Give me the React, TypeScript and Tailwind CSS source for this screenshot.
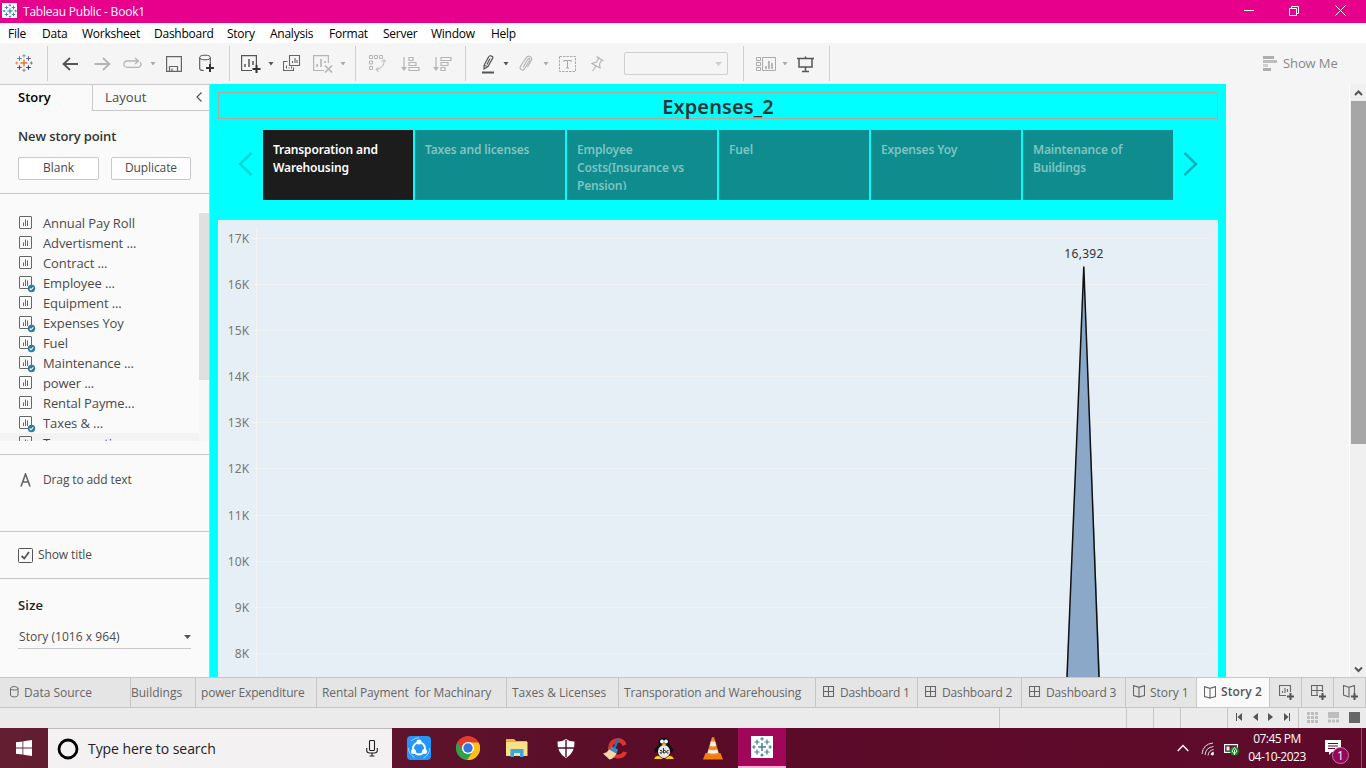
import React from "react";

type P = { className?: string; children?: React.ReactNode };

const Svg = ({ w, h, className = "", children }: P & { w: number; h: number }) => (
  <svg width={w} height={h} viewBox={`0 0 ${w} ${h}`} fill="none" className={`block shrink-0 ${className}`}>
    {children}
  </svg>
);

/* Cross-cluster mark: one big plus, four medium diagonals, four small ones on the axes */
const crosses: [number, number, number, string][] = [
  [9, 9, 3.5, "#e8762c"],
  [4.5, 4.5, 2.3, "#5b879b"],
  [13.5, 4.5, 2.3, "#5c6692"],
  [4.5, 13.5, 2.3, "#c72035"],
  [13.5, 13.5, 2.3, "#1f447e"],
  [9, 1.7, 1.5, "#7199a6"],
  [9, 16.3, 1.5, "#7b848f"],
  [1.7, 9, 1.5, "#eb912c"],
  [16.3, 9, 1.5, "#59879b"],
];
const Mark = ({ size, mono }: { size: number; mono?: string }) => (
  <svg width={size} height={size} viewBox="0 0 18 18" className="block shrink-0">
    {crosses.map(([x, y, r, c], i) => (
      <path key={i} d={`M${x - r} ${y}H${x + r}M${x} ${y - r}V${y + r}`} stroke={mono || c} strokeWidth={i ? 1.1 : 1.4} />
    ))}
  </svg>
);

const Caret = ({ className = "" }: P) => (
  <Svg w={6} h={4} className={className}>
    <path d="M.5 0h5L3 3.5z" fill="currentColor" />
  </Svg>
);

const Sheet = ({ check }: { check?: boolean }) => (
  <Svg w={17} h={17}>
    <rect x="0.5" y="0.5" width="12" height="12" rx="0.5" stroke="#666" />
    <path d="M4.5 10V6.500M6.500 10V3.500M8.500 10V4.500" stroke="#666" />
    {check && (
      <>
        <circle cx="12.500" cy="12.500" r="3.700" fill="#2f7aa3" />
        <path d="M10.700 12.500l1.300 1.300 2.300-2.500" stroke="#fff" strokeWidth="1.100" />
      </>
    )}
  </Svg>
);

const Sep = () => <div className="h-[35px] w-px shrink-0 bg-[#cfcfcf]" />;

const menus: [string, string][] = [
  ["File", "w-[34px]"],
  ["Data", "w-[40px]"],
  ["Worksheet", "w-[72px]"],
  ["Dashboard", "w-[73px]"],
  ["Story", "w-[43px]"],
  ["Analysis", "w-[59px]"],
  ["Format", "w-[54px]"],
  ["Server", "w-[48px]"],
  ["Window", "w-[60px]"],
  ["Help", "w-[40px]"],
];

function TitleBar() {
  return (
    <header className="flex h-[23px] shrink-0 items-center bg-[#e6008c] pl-[2px] text-white">
      <div className="mt-[-2px] flex h-[15px] w-[15px] items-center justify-center bg-white">
        <Mark size={14} mono="#2b7fad" />
      </div>
      <span className="ml-[6px] flex-1 whitespace-pre text-[12px] tracking-[-0.22px]">Tableau Public - Book1</span>
      <Svg w={10} h={12} className="mr-[35px]"><path d="M0 4.5h10" stroke="#fff" /></Svg>
      <Svg w={11} h={12} className="mr-[35px] mt-[-2px]">
        <path d="M.5 3.500h7v7h-7zM2.500 3.500v-2h7v7h-2" stroke="#fff" />
      </Svg>
      <Svg w={11} h={11} className="mr-[20px] mt-[-3px]"><path d="M.5.5l10 10M10.500.5l-10 10" stroke="#fff" /></Svg>
    </header>
  );
}

function Toolbar() {
  return (
    <div className="flex h-[41px] shrink-0 items-center bg-[#f5f5f5]">
      <div className="flex w-[47px] justify-center pb-px"><Mark size={18} /></div>
      <Sep />
      <Svg w={17} h={14} className="ml-[14px]"><path d="M16 7H1.500M8 1L1.500 7 8 13" stroke="#555" strokeWidth="1.800" /></Svg>
      <Svg w={17} h={14} className="ml-[15px]"><path d="M.5 7h15M9 1l6.500 6L9 13" stroke="#b5b5b5" strokeWidth="1.800" /></Svg>
      <Svg w={19} h={13} className="ml-[12px]">
        <path d="M10.500 4H4a3 3 0 0 0 0 6.300h11a3 3 0 0 0 2.200-5M10 4h5M12 1l3.500 3L12 7" stroke="#b5b5b5" strokeWidth="1.300" />
      </Svg>
      <Caret className="ml-[8px] text-[#aaa]" />
      <Svg w={16} h={16} className="ml-[10px]">
        <path d="M.6.600h14.800v14.800H.6zM3.500 15v-4.500h8V15M6 12.500V15" stroke="#666" strokeWidth="1.200" />
      </Svg>
      <Svg w={16} h={20} className="ml-[17px] mt-[1px]">
        <ellipse cx="6" cy="3.500" rx="5.300" ry="2.300" stroke="#555" />
        <path d="M.7 3.500v11c0 1 1.500 2 4 2M11.300 3.500V10" stroke="#555" strokeWidth="1.100" />
        <path d="M7 14h8M11 10v8" stroke="#333" strokeWidth="2" />
      </Svg>
      <div className="ml-[14px]"><Sep /></div>
      <Svg w={20} h={18} className="ml-[11px] mt-px">
        <path d="M11 15.500H.6V.600h14.800V10" stroke="#555" strokeWidth="1.200" />
        <path d="M4 12V9M8 12V4M12 10V6" stroke="#555" strokeWidth="1.500" />
        <path d="M11.500 14h8M15.500 10v8" stroke="#333" strokeWidth="2" />
      </Svg>
      <Caret className="ml-[7px] text-[#555]" />
      <Svg w={18} h={17} className="ml-[9px]">
        <path d="M6.500.5h10v10h-10zM4.500 6.500h-4v9h10v-3M9.500 8V6M12 8V3M14 8V5M3.500 13.500v-3M6 13.500v-1M8.500 13.500v-2" stroke="#666" strokeWidth="1.100" />
      </Svg>
      <Svg w={20} h={18} className="ml-[12px] mt-px">
        <path d="M11 15.500H.6V.600h14.800V8" stroke="#b5b5b5" strokeWidth="1.200" />
        <path d="M4 12V9M8 12V4M12 8V6M12 10.500l7 7M19 10.500l-7 7" stroke="#b5b5b5" strokeWidth="1.600" />
      </Svg>
      <Caret className="ml-[7px] text-[#aaa]" />
      <div className="ml-[9px]"><Sep /></div>
      <Svg w={17} h={17} className="ml-[13px]">
        <path d="M.5.500h3v3h-3zM5.500.500h3v3h-3zM10.500.500h3v3h-3zM.5 6h3v3h-3zM.5 11.500h3v3h-3zM15 5c.5 5-3 9-7.500 9.500M12.500 7L15 4.500 17 7M9.500 12L7 14.500 9.500 17" stroke="#b5b5b5" />
      </Svg>
      <Svg w={19} h={16} className="ml-[15px]">
        <path d="M3 1v13M8 1.500h4v3H8zM8 6.500h7v3H8zM8 11.500h10v3H8z" stroke="#b5b5b5" strokeWidth="1.200" />
        <path d="M0 11h6l-3 4z" fill="#b5b5b5" />
      </Svg>
      <Svg w={19} h={16} className="ml-[13px]">
        <path d="M3 1v13M8 1.500h10v3H8zM8 6.500h7v3H8zM8 11.500h4v3H8z" stroke="#b5b5b5" strokeWidth="1.200" />
        <path d="M0 11h6l-3 4z" fill="#b5b5b5" />
      </Svg>
      <div className="ml-[13px]"><Sep /></div>
      <Svg w={12} h={19} className="ml-[16px] mt-px">
        <path d="M2 10.500L6.500 2q.7-1.500 2-1.200l1.500.6q1.300.7.600 2L6 11.500 2 14zM2 10.500l4 1M8 3.500L5 9.500" stroke="#555" strokeWidth="1.200" />
        <path d="M0 17.500h12" stroke="#555" strokeWidth="2" />
      </Svg>
      <Caret className="ml-[9px] text-[#555]" />
      <Svg w={14} h={17} className="ml-[10px]">
        <path d="M4 12.500L9 4q1-1 1.700-.3.500.6 0 1.500l-5 8.500q-1.300 2-3.200 1-2.200-1.200-1-3.500L7 3q1.800-2.700 4-1.500 2.600 1.300 1.200 4L8.500 12" stroke="#b5b5b5" strokeWidth="1.200" />
      </Svg>
      <Caret className="ml-[10px] text-[#aaa]" />
      <Svg w={17} h={16} className="ml-[10px]">
        <rect x=".5" y=".5" width="16" height="15" stroke="#aaa" strokeDasharray="2.500 1" />
        <path d="M5 6V4.500h7V6M8.500 4.500v7.500M7 12h3" stroke="#aaa" strokeWidth="1.100" />
      </Svg>
      <Svg w={13} h={16} className="ml-[15px]">
        <path d="M6.500 1l5.500 3.500-2 .5L8.500 8l.5 4L1 7.500 5.500 6l2-3zM5 10l-3.500 5" stroke="#b5b5b5" strokeWidth="1.200" />
      </Svg>
      <div className="ml-[20px] flex h-[23px] w-[104px] items-center justify-end rounded-[2px] border border-[#cfcfcf] pr-[5px]">
        <Svg w={7} h={4}><path d="M0 0h7L3.500 4z" fill="#ccc" /></Svg>
      </div>
      <div className="ml-[15px]"><Sep /></div>
      <Svg w={20} h={15} className="ml-[12px] mt-px">
        <path d="M.5.500h4v3h-4zM.5 5.500h4v3h-4zM.5 10.500h4v3h-4zM6.500.500h13v13h-13z" stroke="#aaa" />
        <path d="M10 12V9M13 12V4M16 12V6" stroke="#aaa" strokeWidth="1.600" />
      </Svg>
      <Caret className="ml-[6px] text-[#aaa]" />
      <Svg w={17} h={17} className="ml-[9px] mt-px">
        <path d="M0 2.500h17M2 2.500V11h13V2.500M8.500 .5v2M8.500 11V15.500M5 15.500h7" stroke="#555" strokeWidth="1.500" />
      </Svg>
      <div className="ml-[15px] flex-1"><Sep /></div>
      <Svg w={14} h={15}>
        <path d="M0 1.500h11M0 13.500h8" stroke="#aeaeae" strokeWidth="3" />
        <path d="M0 5.500h14" stroke="#bdbdbd" strokeWidth="3" />
        <path d="M0 9.500h5" stroke="#d0d0d0" strokeWidth="3" />
      </Svg>
      <span className="ml-[6px] w-[83px] whitespace-pre text-[13px] tracking-[-0.1px] text-[#888]">Show Me</span>
    </div>
  );
}

const sheets: [string, boolean][] = [
  ["Annual Pay Roll", false],
  ["Advertisment ...", false],
  ["Contract ...", false],
  ["Employee ...", true],
  ["Equipment ...", false],
  ["Expenses Yoy", true],
  ["Fuel", true],
  ["Maintenance ...", true],
  ["power ...", false],
  ["Rental Payme...", false],
  ["Taxes & ...", true],
  ["Transporation ...", false],
];

function SidePane() {
  return (
    <aside className="flex w-[210px] shrink-0 flex-col border-r border-t border-[#c8c8c8] bg-[#fafafa] text-[#4a4a4a]">
      <div className="flex h-[26px] shrink-0">
        <div className="w-[92px] pl-[18px] pt-[3px] text-[13px] font-semibold leading-[18px] text-black">Story</div>
        <div className="flex flex-1 items-start border-b border-l border-[#c8c8c8] pl-[12px] pt-[3px] text-[13px] leading-[18px] tracking-[0.1px]">
          <span className="flex-1">Layout</span>
          <Svg w={6} h={10} className="mr-[7px] mt-[4px]"><path d="M5.500.5L1 5l4.500 4.500" stroke="#555" strokeWidth="1.200" /></Svg>
        </div>
      </div>
      <div className="h-[83px] shrink-0 border-b border-[#c8c8c8] px-[18px] pt-[16px]">
        <div className="text-[13px] font-semibold leading-[18px] tracking-[-0.12px] text-[#333]">New story point</div>
        <div className="mt-[12px] flex gap-[12px] text-[12px]">
          <div className="flex h-[23px] w-[81px] items-center justify-center rounded-[2px] border border-[#c8c8c8] bg-white pb-px">Blank</div>
          <div className="flex h-[23px] w-[80px] items-center justify-center rounded-[2px] border border-[#c8c8c8] bg-white pb-px tracking-[-0.1px]">Duplicate</div>
        </div>
      </div>
      <div className="flex h-[261px] shrink-0 border-b border-[#c8c8c8] pb-[13px] pt-[19px]">
        <div className="flex-1 overflow-hidden">
          {sheets.map(([name, used], i) => (
            <div key={name} className={i === 11 ? "flex h-[20px] bg-[#f3f3f3] pl-[19px] pt-[3px]" : "flex h-[20px] pl-[19px] pt-[3px]"}>
              <Sheet check={used} />
              <span className="ml-[7px] mt-[-2px] whitespace-pre text-[13px] leading-[18px] tracking-[-0.1px]">{name}</span>
            </div>
          ))}
        </div>
        <div className="w-[10px] bg-[#f7f7f7]"><div className="h-[167px] bg-[#e0e0e0]" /></div>
      </div>
      <div className="flex h-[77px] shrink-0 border-b border-[#c8c8c8] pl-[20px] pt-[17px] text-[12px] leading-[16px]">
        <Svg w={12} h={14} className="mt-px"><path d="M1 13.500L5.500 1 10 13.500M2.800 9h5.400" stroke="#666" strokeWidth="1.600" /></Svg>
        <span className="ml-[11px] tracking-[-0.12px]">Drag to add text</span>
      </div>
      <div className="flex h-[47px] shrink-0 items-center border-b border-[#c8c8c8] pl-[18px] text-[12px]">
        <Svg w={15} h={15}>
          <rect x=".5" y=".5" width="14" height="14" rx="1" stroke="#555" />
          <path d="M3.500 8l2.800 2.500L11 4" stroke="#555" strokeWidth="1.800" />
        </Svg>
        <span className="ml-[5px] tracking-[-0.1px]">Show title</span>
      </div>
      <div className="px-[18px] pt-[17px]">
        <div className="text-[13px] font-semibold leading-[18px] tracking-[0.2px] text-[#222]">Size</div>
        <div className="mt-[11px] flex h-[24px] items-center border-b border-[#c8c8c8] pl-px pt-px text-[12px] tracking-[0.05px]">
          <span className="flex-1">Story (1016 x 964)</span>
          <Svg w={7} h={4}><path d="M0 0h7L3.500 4z" fill="#555" /></Svg>
        </div>
      </div>
    </aside>
  );
}

const points = ["Transporation and Warehousing", "Taxes and licenses", "Employee Costs(Insurance vs Pension)", "Fuel", "Expenses Yoy", "Maintenance of Buildings"];
const ticks: [string, number][] = [["17K", 18.5], ["16K", 64.5], ["15K", 110.5], ["14K", 156.5], ["13K", 202.5], ["12K", 248.5], ["11K", 295.5], ["10K", 341.5], ["9K", 387.5], ["8K", 433.5]];

function StoryView() {
  return (
    <main className="flex w-[1016px] shrink-0 flex-col bg-[#00ffff] px-[8px] pt-[8px]">
      <h1 className="flex h-[27px] shrink-0 items-center justify-center border border-[#b0a898] pt-[2px] font-['Noto_Sans'] text-[20px] font-semibold tracking-[0.1px] text-[#333]">Expenses_2</h1>
      <div className="mt-[11px] flex h-[70px] shrink-0 items-center">
        <div className="w-[45px] pb-[2px] pl-[20px]"><Svg w={15} h={24}><path d="M13.500 1L2 12l11.500 11" stroke="#00d5d8" strokeWidth="2.500" /></Svg></div>
        <div className="flex gap-[2px]">
          {points.map((p, i) => (
            <div key={p} className={i === 0
              ? "h-[70px] w-[150px] bg-[#1c1c1c] pl-[10px] pr-[8px] pt-[11px] text-white"
              : "h-[70px] w-[150px] bg-[#0f8c8d] pl-[10px] pr-[8px] pt-[11px] text-[#80c3c3]"}>
              <div className="h-[49px] overflow-hidden font-['Noto_Sans'] text-[12px] font-semibold leading-[18px] tracking-[-0.15px]">{p}</div>
            </div>
          ))}
        </div>
        <Svg w={15} h={24} className="ml-[10px] mt-[-2px]"><path d="M1.500 1L13 12 1.500 23" stroke="#00b5b8" strokeWidth="2.500" /></Svg>
      </div>
      <div className="mt-[20px] h-[457px] shrink-0 bg-[#e6eff5]">
        <svg width="1000" height="457" viewBox="0 0 1000 457" className="block font-['Noto_Sans'] text-[12px]">
          <path d="M38.500 8v449" stroke="#f3f3f3" />
          {ticks.map(([t, y]) => (
            <g key={t}>
              <path d={`M33 ${y}H992`} stroke="#f1f2f2" />
              <text x="31.500" y={y + 4.5} textAnchor="end" fill="#777" letterSpacing="0.2">{t}</text>
            </g>
          ))}
          <path d="M848.500 457L866 47l16 410z" fill="#8ba8c8" />
          <path d="M849 457L865.800 46.500 881 457" stroke="#111" strokeWidth="1.500" fill="none" />
          <text x="866" y="38" textAnchor="middle" fill="#333" letterSpacing="0.300">16,392</text>
        </svg>
      </div>
    </main>
  );
}

function Scrollbar() {
  return (
    <div className="flex w-[17px] flex-col items-center border-l border-white bg-[#f0f0f0]">
      <Svg w={15} h={17}><path d="M4 11L7.500 7.500 11 11" stroke="#555" strokeWidth="2" /></Svg>
      <div className="h-[343px] w-[15px] bg-[#a6a6a6]" />
      <div className="flex-1" />
      <Svg w={15} h={17}><path d="M4 7.500L7.500 11 11 7.500" stroke="#555" strokeWidth="2" /></Svg>
    </div>
  );
}

const GridIcon = ({ plus }: { plus?: boolean }) => (
  <Svg w={plus ? 16 : 12} h={plus ? 16 : 12}>
    <path d={plus ? "M11.500 7V.5H.5v10H7M6 .5v10M.5 5.500h11" : "M.5.500h10v10H.5zM5.500.500v10M.5 5.500h10"} stroke="#666" strokeWidth="1.100" />
    {plus && <path d="M8 11.500h7M11.500 8v7" stroke="#555" strokeWidth="2" />}
  </Svg>
);
const BookIcon = ({ plus }: { plus?: boolean }) => (
  <Svg w={plus ? 16 : 12} h={plus ? 16 : 13}>
    <path d={plus ? "M6 2v10L.5 10V.5L6 2.300 11.500.5V8" : "M6 2.300V12L.5 10.500V.6L6 2.300 11.500.6v9.900L6 12"} stroke="#666" strokeWidth="1.100" />
    {plus && <path d="M8 11.500h7M11.500 8v7" stroke="#555" strokeWidth="2" />}
  </Svg>
);

const tabs: { t: string; c: string; icon?: React.ReactNode }[] = [
  { t: "Data Source", c: "w-[131px] pl-[10px] border-r", icon: <Svg w={9} h={12}><path d="M.5 2.500C.5 0 8 0 8 2.500V9c0 2.500-7.500 2.500-7.500 0zM.5 2.500C.5 4.500 8 4.500 8 2.500" stroke="#666" /></Svg> },
  { t: "Buildings", c: "w-[65px] border-r" },
  { t: "power Expenditure", c: "w-[121px] pl-[5px] border-r tracking-[-0.18px]" },
  { t: "Rental Payment  for Machinary", c: "w-[190px] pl-[5px] border-r tracking-[-0.1px]" },
  { t: "Taxes & Licenses", c: "w-[112px] pl-[5px] border-r" },
  { t: "Transporation and Warehousing", c: "w-[197px] pl-[5px] border-r tracking-[-0.13px]" },
  { t: "Dashboard 1", c: "w-[102px] pl-[7px] border-r tracking-[-0.2px]", icon: <GridIcon /> },
  { t: "Dashboard 2", c: "w-[104px] pl-[7px] border-r tracking-[-0.15px]", icon: <GridIcon /> },
  { t: "Dashboard 3", c: "w-[104px] pl-[7px] border-r tracking-[-0.15px]", icon: <GridIcon /> },
  { t: "Story 1", c: "w-[71px] pl-[7px] border-r tracking-[-0.05px]", icon: <BookIcon /> },
];

function SheetTabs() {
  return (
    <nav className="flex h-[31px] shrink-0 border-y border-[#c6c6c6] bg-[#e5e5e5] text-[12px] text-[#666]">
      {tabs.map((x) => (
        <div key={x.t} className={`flex shrink-0 items-center whitespace-pre border-[#c6c6c6] ${x.c}`}>
          {x.icon && <span className="mr-[5px] mt-[-2px]">{x.icon}</span>}
          <span>{x.t}</span>
        </div>
      ))}
      <div className="flex w-[72px] shrink-0 items-center gap-[5px] bg-[#fafafa] pl-[7px] font-semibold text-[#555]"><BookIcon /><span className="whitespace-pre pb-px tracking-[0.1px]">Story 2</span></div>
      <div className="flex w-[33px] items-center border-x border-[#c6c6c6] pl-[9px]">
        <Svg w={16} h={16}><path d="M7 10.500H.5V.500h11V7M3.500 8V6M6 8V3M8.500 7V4" stroke="#666" strokeWidth="1.100" /><path d="M8 11.500h7M11.500 8v7" stroke="#555" strokeWidth="2" /></Svg>
      </div>
      <div className="flex w-[32px] items-center border-r border-[#c6c6c6] pl-[9px]"><GridIcon plus /></div>
      <div className="flex flex-1 items-center border-r border-[#c6c6c6] pl-[9px]"><BookIcon plus /></div>
    </nav>
  );
}

function StatusBar() {
  return (
    <div className="flex h-[20px] shrink-0 bg-[#ebebeb]">
      <div className="w-[1000px] shrink-0 border-r border-[#c6c6c6]" />
      <div className="w-[127px] border-r border-[#c6c6c6]" />
      <div className="w-[27px] border-r border-[#c6c6c6]" />
      <div className="w-[27px] border-r border-[#c6c6c6]" />
      <div className="w-[47px] border-r border-[#c6c6c6]" />
      <div className="flex w-[71px] items-center gap-[10.500px] border-r border-[#c6c6c6] pb-[2px] pl-[8px]">
        <Svg w={6} h={8}><path d="M.5 0v8" stroke="#555" /><path d="M6 0v8L1.500 4z" fill="#555" /></Svg>
        <Svg w={5} h={8}><path d="M5 0v8L0 4z" fill="#555" /></Svg>
        <Svg w={5} h={8}><path d="M0 0v8l5-4z" fill="#555" /></Svg>
        <Svg w={6} h={8}><path d="M5.500 0v8" stroke="#555" /><path d="M0 0v8l4.500-4z" fill="#555" /></Svg>
      </div>
      <div className="flex flex-1 items-center gap-[10px] pb-px pl-[8px]">
        <Svg w={11} h={11}><path d="M0 1.500h11M0 5.500h11M0 9.500h11" stroke="#bdbdbd" strokeWidth="3" strokeDasharray="3 1" /></Svg>
        <Svg w={11} h={11}><path d="M0 0h11v6H0z" fill="#bdbdbd" /><path d="M0 9h11" stroke="#bdbdbd" strokeWidth="3" strokeDasharray="3 1" /></Svg>
        <div className="h-[11px] w-[11px] bg-[#666]" />
      </div>
    </div>
  );
}

function Taskbar() {
  return (
    <footer className="flex h-[40px] shrink-0 bg-linear-to-r from-[#641e32] via-[#590b27] to-[#600a2b] text-white">
      <div className="flex w-[48px] shrink-0 items-center justify-center">
        <Svg w={16} h={16}><path d="M0 2.300l6.500-.9v6.200H0zM7.300 1.300L16 0v7.600H7.300zM0 8.400h6.500v6.200L0 13.700zM7.300 8.400H16V16l-8.700-1.300z" fill="#fff" /></Svg>
      </div>
      <div className="flex w-[344px] shrink-0 items-center border-t border-[#c0b8bb] bg-[#f4f1f3] pl-[9px] text-[#222]">
        <Svg w={22} h={22}><circle cx="11" cy="11" r="9" stroke="#000" strokeWidth="2.800" /></Svg>
        <span className="ml-[9px] flex-1 whitespace-pre text-[14px] tracking-[-0.06px]">Type here to search</span>
        <Svg w={12} h={17} className="mr-[14px]"><rect x="3.500" y=".5" width="5" height="10" rx="1" stroke="#222" strokeWidth="1.100" /><path d="M.7 8v2.500q0 2.500 3 2.500h4.600q3 0 3-2.500V8M6 13v3M3.500 16h5" stroke="#222" strokeWidth="1.100" /></Svg>
      </div>
      <div className="flex shrink-0 items-center">
        <div className="flex w-[49px] justify-center pl-[5px]">
          <Svg w={24} h={24}><rect width="24" height="24" rx="4" fill="#2597fc" /><circle cx="12" cy="12.500" r="6" stroke="#fff" strokeWidth="1.800" /><g fill="#fff"><circle cx="12" cy="6" r="2.500" /><circle cx="6.500" cy="15.500" r="2.500" /><circle cx="17.500" cy="15.500" r="2.500" /></g><path d="M4 5Q8 1.500 12 1.700M22.500 12q0 7-6 10M1.500 12q0 6 6 9.500" stroke="#9bd0ff" /></Svg>
        </div>
        <div className="flex w-[49px] justify-center pl-[4px]">
          <Svg w={24} h={24}><circle cx="12" cy="12" r="12" fill="#e33b2e" /><path d="M1.600 6A12 12 0 0 0 11 24l6-9H7z" fill="#2da14c" /><path d="M12 6.500h10.700A12 12 0 0 1 11 24l6.200-9z" fill="#fbc116" /><circle cx="12" cy="12" r="6.100" fill="#fff" /><circle cx="12" cy="12" r="4.700" fill="#3676dd" /></Svg>
        </div>
        <div className="flex w-[49px] justify-center pl-[4px]">
          <Svg w={22} h={20}><path d="M0 1h8l2 2h11v15H0z" fill="#e9b53e" /><path d="M0 4h21.500v14H0z" fill="#fbdf86" /><path d="M4.500 19v-8h13v8h-3.500v-4H8v4z" fill="#36a8df" /></Svg>
        </div>
        <div className="flex w-[49px] justify-center pl-[4px]">
          <Svg w={18} h={19}><path d="M9 0q4 2.800 8.500 2.500Q18 14 9 19 0 14 .5 2.500 5 2.800 9 0z" fill="#fff" /><path d="M9 1v17M1 9h16" stroke="#590b27" strokeWidth="1.400" /></Svg>
        </div>
        <div className="flex w-[49px] justify-center pl-[6px]">
          <Svg w={25} h={23}><path d="M23.500 7.500l-4 1.500q-1-3.500-4.500-3.500-5.500.5-5.500 6t5.500 6q3.500 0 5-3l4 .8q-2 6.500-9 6.200Q5 21 5 11.500T15 1q6.500 0 8.500 6.500z" fill="#d8352c" /><path d="M15.500 1.500L11 12" stroke="#2774b5" strokeWidth="2.500" /><path d="M8.500 9.500l6.500 3-1.500 4-7.500-3.500z" fill="#3c8cc9" /><path d="M6 12.500l7.500 4q-3 5.500-7 6L0 16.500q4-.5 6-4z" fill="#f4d8a8" /></Svg>
        </div>
        <div className="flex w-[49px] justify-center pl-[4px]">
          <Svg w={22} h={23}><path d="M11 .5c4 0 5.200 3 5.200 6.500l4.500 6-2 3L16 13l1 8H5l1-8-3.500 3-1.500-3 4.700-6C5.700 3.500 7 .5 11 .5z" fill="#111" /><ellipse cx="11" cy="14.500" rx="6" ry="6.500" fill="#e8e8e8" /><circle cx="9" cy="4.500" r="1.900" fill="#fff" /><circle cx="13" cy="4.500" r="1.900" fill="#fff" /><path d="M8.500 7l2.500-1 2.500 1-2.500 2z" fill="#f5b91d" /><path d="M7 14q1-2 2 0v2q-2 1-2-1M10.500 11v5q2 .5 2-1.500t-2-1M15.500 13.500q-2 0-2 1.500t2 1" stroke="#333" /><path d="M1 22q2-4 5-3l4 3zM12 22l4-3q3-1 5 3z" fill="#fccc16" /></Svg>
        </div>
        <div className="flex w-[52px] justify-center pl-[2px]">
          <Svg w={20} h={23}><path d="M2.500 16h15L20 22.500H0z" fill="#ef7e0a" /><path d="M10 0q1 0 1.300 1L16 17q-6 3.500-12 0L8.700 1Q9 0 10 0z" fill="#f28a16" /><path d="M7.800 4.500h4.400l1.200 4.300q-3.400 1.500-6.800 0zM5.600 12.500q4.400 1.500 8.800 0l1 3.200q-5.400 2-10.800 0z" fill="#eee" /></Svg>
        </div>
        <div className="flex h-[40px] w-[48px] items-center justify-center border-b-2 border-[#ffacd9] bg-[#a10758]">
          <div className="flex h-[22px] w-[22px] items-center justify-center bg-white"><Mark size={20} mono="#477e9b" /></div>
        </div>
      </div>
      <div className="flex-1" />
      <Svg w={12} h={8} className="mt-[16px]"><path d="M.7 7L6 1.500 11.300 7" stroke="#fff" strokeWidth="1.400" /></Svg>
      <Svg w={14} h={14} className="ml-[12px] mt-[14px]"><path d="M1 12Q2 2 12 1M4 13q.5-7.500 8.500-8.500M7 13.500q.5-5 5.500-6M10 13q.5-2.500 3-3" stroke="#ddd" /><circle cx="11.500" cy="12" r="1.400" fill="#fff" /></Svg>
      <Svg w={16} h={13} className="ml-[9px] mt-[15px]"><path d="M.6 1.600h12.800v7.800H.6z" stroke="#fff" strokeWidth="1.200" /><path d="M2.500 3.500h3v4h-3z" fill="#fff" /><circle cx="10.500" cy="8" r="4.500" fill="#0b8a20" /><path d="M10.500 4.500L13 8l-2.500 3L8 8zM10.500 7v5" stroke="#d8f5d8" /></Svg>
      <div className="ml-[5px] mt-[2px] w-[64px] whitespace-pre text-center text-[12px] leading-[18px] tracking-[-0.5px]">07:45 PM<br />04-10-2023</div>
      <Svg w={26} h={28} className="ml-[15px] mt-[10px]"><path d="M1 2h16v12H8l-3 3v-3H1z" fill="#fff" /><path d="M4 5.500h10M4 8h10M4 10.500h7" stroke="#600a2b" /><circle cx="16.500" cy="17.500" r="8" fill="#97065b" stroke="#c07aa0" /><text x="16.500" y="22" textAnchor="middle" fill="#fff" fontSize="12">1</text></Svg>
      <div className="ml-[11px] mr-[4px] w-px bg-[#8c5066]" />
    </footer>
  );
}

export default function App() {
  return (
    <div className="flex h-[768px] w-[1366px] flex-col overflow-hidden bg-[#f5f5f5] font-['Open_Sans',sans-serif]">
      <TitleBar />
      <div className="flex h-[20px] shrink-0 items-center bg-white pl-[8px] pt-px text-[12px] tracking-[-0.25px] text-black">
        {menus.map(([m, w]) => <span key={m} className={w}>{m}</span>)}
      </div>
      <Toolbar />
      <div className="flex h-[593px] shrink-0">
        <SidePane />
        <StoryView />
        <div className="flex-1" />
        <Scrollbar />
      </div>
      <SheetTabs />
      <StatusBar />
      <Taskbar />
    </div>
  );
}
